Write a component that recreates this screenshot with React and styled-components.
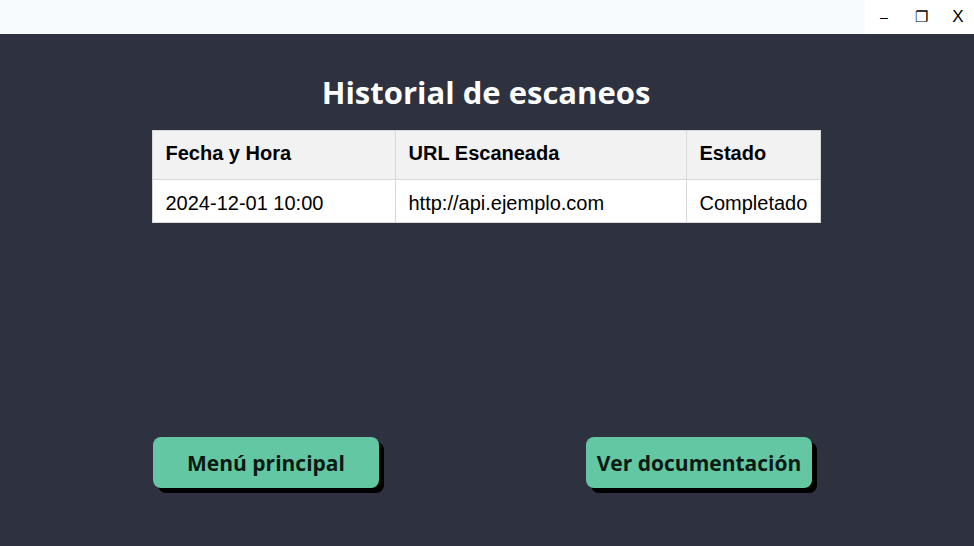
import styled, { createGlobalStyle } from "styled-components"

const Global = createGlobalStyle`
    html, body { margin: 0; padding: 0; }
    body { background: #2e3140; }
`
const Window = styled.div`
    width: 974px;
    height: 546px;
    background: #2e3140;
    display: flex;
    flex-direction: column;
    overflow: hidden;
`
const TitleBar = styled.div`
    height: 34px;
    background: #f8fbfe;
    display: flex;
    justify-content: flex-end;
`
const Controls = styled.div`
    width: 109px;
    background: #ffffff;
    display: flex;
    align-items: center;
    gap: 13px;
    padding-left: 7px;
    box-sizing: border-box;
    font-family: "Liberation Sans", Arial, sans-serif;
    color: #000;
`
const Ctrl = styled.span`
    display: inline-flex;
    align-items: center;
    justify-content: center;
    width: 24px;
    font-size: ${p => p.$size || 16}px;
`
const Content = styled.main`
    display: flex;
    flex-direction: column;
    align-items: center;
    padding-top: 38px;
    padding-right: 2px;
`
const Title = styled.h1`
    margin: 0;
    color: #ffffff;
    font-family: "Open Sans", sans-serif;
    font-weight: 700;
    font-size: 31px;
    line-height: 40px;
`
const Table = styled.table`
    margin-top: 18px;
    width: 668px;
    table-layout: fixed;
    border-collapse: collapse;
    background: #ffffff;
    font-family: "Liberation Sans", Arial, sans-serif;
    font-size: 20px;
    color: #000;
`
const Th = styled.th`
    background: #f2f2f2;
    height: 49px;
    text-align: left;
    font-weight: 700;
    padding: 0 13px 3px;
    border: 1px solid #d8d8d8;
    width: ${p => p.$w}px;
    box-sizing: border-box;
`
const Td = styled.td`
    height: 43px;
    padding: 5px 13px 0;
    border: 1px solid #d8d8d8;
    box-sizing: border-box;
    white-space: nowrap;
`
const Buttons = styled.div`
    margin-top: 214px;
    width: 668px;
    box-sizing: border-box;
    padding: 0 8px 0 1px;
    display: flex;
    justify-content: space-between;
`
const Button = styled.button`
    width: 226px;
    height: 51px;
    background: #62c7a2;
    border: none;
    border-radius: 8px;
    box-shadow: 5px 5px 0 #000000;
    font-family: "Open Sans", sans-serif;
    font-weight: 700;
    font-size: 21px;
    color: #0d1a14;
    cursor: pointer;
    padding: 0;
`

export default function App() {
    return (
        <Window>
            <Global />
            <TitleBar>
                <Controls>
                    <Ctrl $size={14}>–</Ctrl>
                    <Ctrl $size={15}>❐</Ctrl>
                    <Ctrl $size={17}>X</Ctrl>
                </Controls>
            </TitleBar>
            <Content>
                <Title>Historial de escaneos</Title>
                <Table>
                    <thead>
                        <tr>
                            <Th $w={243}>Fecha y Hora</Th>
                            <Th $w={291}>URL Escaneada</Th>
                            <Th $w={134}>Estado</Th>
                        </tr>
                    </thead>
                    <tbody>
                        <tr>
                            <Td>2024-12-01 10:00</Td>
                            <Td>http://api.ejemplo.com</Td>
                            <Td>Completado</Td>
                        </tr>
                    </tbody>
                </Table>
                <Buttons>
                    <Button>Menú principal</Button>
                    <Button>Ver documentación</Button>
                </Buttons>
            </Content>
        </Window>
    )
}
